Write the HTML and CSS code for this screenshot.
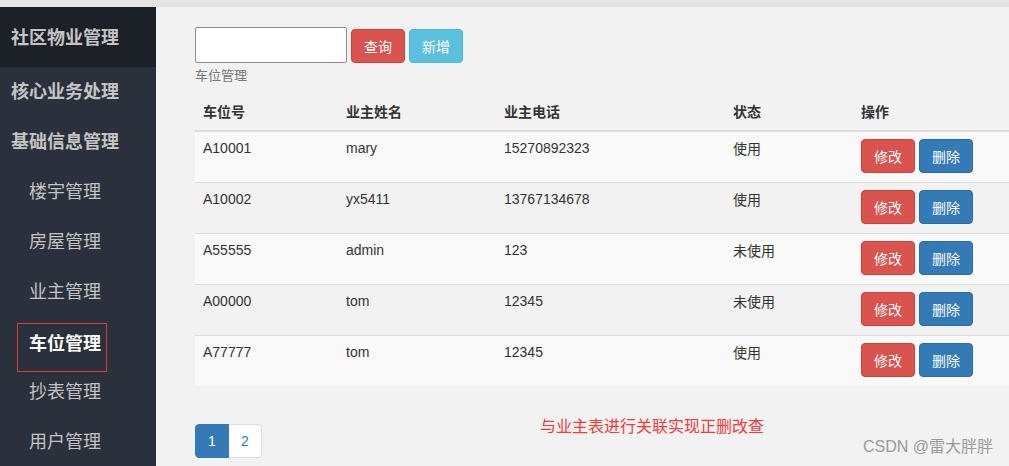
FILE: index.html
```html
<!DOCTYPE html>
<html lang="zh">
<head>
<meta charset="utf-8">
<title>车位管理</title>
<link rel="stylesheet" href="styles.css">
</head>
<body>
<div class="topbar"></div>
<div class="layout">
  <aside class="sidebar">
    <div class="brand">社区物业管理</div>
    <ul class="menu">
      <li class="group">核心业务处理</li>
      <li class="group">基础信息管理</li>
      <li class="item"><a>楼宇管理</a></li>
      <li class="item"><a>房屋管理</a></li>
      <li class="item"><a>业主管理</a></li>
      <li class="item current"><a class="active">车位管理</a></li>
      <li class="item"><a>抄表管理</a></li>
      <li class="item"><a>用户管理</a></li>
    </ul>
  </aside>
  <main class="main">
    <form class="search">
      <input class="search-input" type="text">
      <button class="btn btn-danger" type="button">查询</button>
      <button class="btn btn-info" type="button">新增</button>
    </form>
    <div class="caption">车位管理</div>
    <table class="table">
      <colgroup>
        <col class="c1"><col class="c2"><col class="c3"><col class="c4"><col class="c5">
      </colgroup>
      <thead>
        <tr><th>车位号</th><th>业主姓名</th><th>业主电话</th><th>状态</th><th>操作</th></tr>
      </thead>
      <tbody>
        <tr><td>A10001</td><td>mary</td><td>15270892323</td><td>使用</td><td><button class="btn btn-danger">修改</button> <button class="btn btn-primary">删除</button></td></tr>
        <tr><td>A10002</td><td>yx5411</td><td>13767134678</td><td>使用</td><td><button class="btn btn-danger">修改</button> <button class="btn btn-primary">删除</button></td></tr>
        <tr><td>A55555</td><td>admin</td><td>123</td><td>未使用</td><td><button class="btn btn-danger">修改</button> <button class="btn btn-primary">删除</button></td></tr>
        <tr><td>A00000</td><td>tom</td><td>12345</td><td>未使用</td><td><button class="btn btn-danger">修改</button> <button class="btn btn-primary">删除</button></td></tr>
        <tr><td>A77777</td><td>tom</td><td>12345</td><td>使用</td><td><button class="btn btn-danger">修改</button> <button class="btn btn-primary">删除</button></td></tr>
      </tbody>
    </table>
    <div class="footer-row">
      <ul class="pagination">
        <li class="page active">1</li>
        <li class="page">2</li>
      </ul>
      <div class="note">与业主表进行关联实现正删改查</div>
    </div>
    <div class="watermark">CSDN @雷大胖胖</div>
  </main>
</div>
</body>
</html>
```

FILE: styles.css
```css
* { box-sizing: border-box; }
html, body { margin: 0; padding: 0; }
body {
  font-family: "Liberation Sans", "Noto Sans CJK SC", sans-serif;
  font-size: 14px;
  line-height: 1.42857;
  color: #333;
  background: #f2f2f2;
  width: 1009px;
  height: 466px;
  overflow: hidden;
}
.topbar { height: 7px; background: #e4e4e4; }
.layout { display: flex; height: 459px; }

.sidebar {
  width: 156px;
  flex: none;
  background: #2a313c;
  color: #c4c4c4;
  font-family: "Noto Sans CJK SC", sans-serif;
}
.brand {
  height: 60px;
  line-height: 58px;
  padding-left: 11px;
  font-size: 18px;
  font-weight: bold;
  background: #1c2027;
}
.menu { list-style: none; margin: 0; padding: 0; }
.menu li { height: 50px; font-size: 18px; }
.group { line-height: 46px; padding-left: 11px; font-weight: bold; }
.item a { display: block; line-height: 46px; padding-left: 29px; }
.item.current { padding-top: 6px; }
.item a.active {
  margin-left: 17px;
  width: 90px;
  height: 49px;
  line-height: 36px;
  padding-left: 11px;
  border: 1px solid #e53935;
  color: #fff;
  font-weight: bold;
}

.main {
  position: relative;
  flex: 1;
  padding: 20px 0 0 39px;
}
.search { display: flex; align-items: flex-end; gap: 4px; margin: 0; }
.search-input {
  width: 152px;
  height: 36px;
  border: 1px solid #8a8a96;
  border-radius: 2px;
  background: #fff;
  margin: 0;
}
.btn {
  display: inline-block;
  width: 54px;
  height: 34px;
  padding: 0;
  border: 1px solid transparent;
  border-radius: 4px;
  font-family: "Noto Sans CJK SC", sans-serif;
  font-size: 14px;
  color: #fff;
  cursor: pointer;
  vertical-align: middle;
}
.btn-danger { background: #d9534f; border-color: #d43f3a; }
.btn-info { background: #5bc0de; border-color: #46b8da; }
.btn-primary { background: #337ab7; border-color: #2e6da4; }

.caption {
  font-family: "Noto Sans CJK SC", sans-serif;
  font-size: 13px;
  color: #777;
  line-height: 18px;
  margin-top: 3px;
}

.table {
  width: 814px;
  border-collapse: collapse;
  border-spacing: 0;
  margin-top: 9px;
  table-layout: fixed;
}
.c1 { width: 143px; }
.c2 { width: 158px; }
.c3 { width: 229px; }
.c4 { width: 128px; }
.c5 { width: 156px; }
.table th, .table td {
  padding: 6px 8px 10px;
  text-align: left;
  vertical-align: top;
  line-height: 20px;
}
.table th {
  font-family: "Noto Sans CJK SC", sans-serif;
  font-weight: bold;
  font-size: 14px;
  padding: 8px;
  border-bottom: 2px solid #ddd;
  height: 38px;
}
.table td { border-top: 1px solid #ddd; }
.table tbody tr:first-child td { border-top: 0; }
.table tbody tr:nth-child(odd) { background: #f9f9f9; }
.table td:nth-child(4) { font-family: "Noto Sans CJK SC", sans-serif; }
.table td:last-child { padding-top: 7px; padding-bottom: 8px; white-space: nowrap; }
.table tbody tr { height: 51px; }

.footer-row { display: flex; align-items: flex-start; margin-top: 38px; }
.pagination { list-style: none; margin: 0; padding: 0; display: flex; }
.page {
  width: 34px;
  height: 34px;
  line-height: 32px;
  text-align: center;
  border: 1px solid #ddd;
  background: #fff;
  color: #337ab7;
  font-size: 14px;
}
.page + .page { margin-left: -1px; border-radius: 0 4px 4px 0; }
.page.active {
  background: #337ab7;
  border-color: #337ab7;
  color: #fff;
  border-radius: 4px 0 0 4px;
  position: relative;
  z-index: 1;
}
.note {
  margin-left: 278px;
  margin-top: -10px;
  color: #f53b3b;
  font-family: "Noto Sans CJK SC", sans-serif;
  font-size: 16px;
}
.watermark {
  position: absolute;
  right: 16px;
  bottom: 7px;
  color: #9a9a9a;
  font-size: 16px;
  font-family: "Liberation Sans", "Noto Sans CJK SC", sans-serif;
}
```
